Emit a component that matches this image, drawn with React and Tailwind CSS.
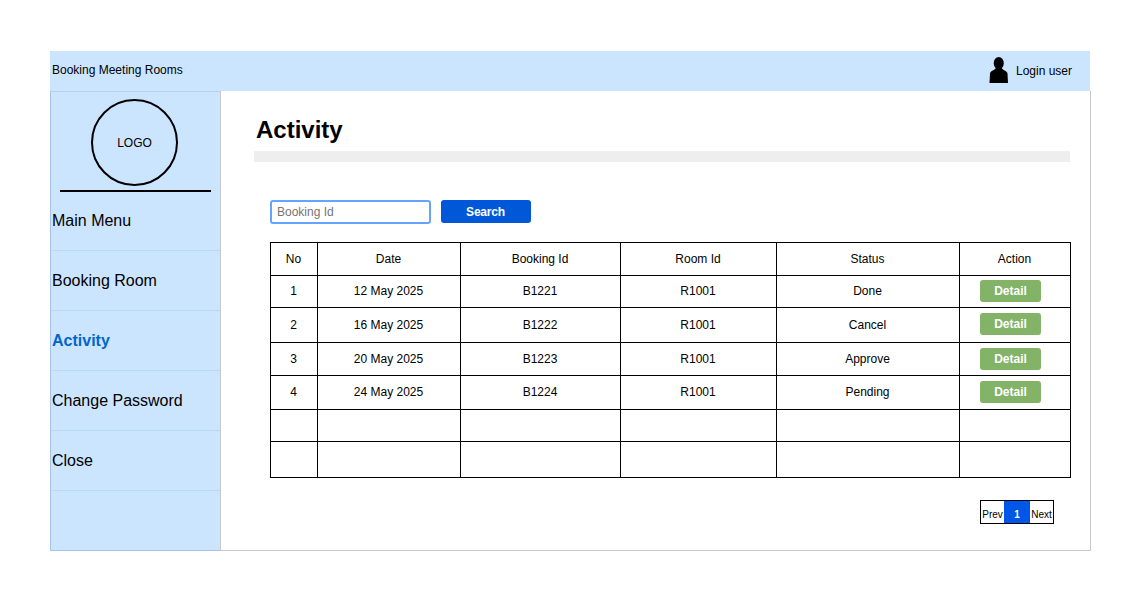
const rows = [
  ["1", "12 May 2025", "B1221", "R1001", "Done", 32, "pb-[2px]", "pb-[2px]"],
  ["2", "16 May 2025", "B1222", "R1001", "Cancel", 35, "", "pb-[2px]"],
  ["3", "20 May 2025", "B1223", "R1001", "Approve", 33, "", ""],
  ["4", "24 May 2025", "B1224", "R1001", "Pending", 34, "pb-[2px]", "pb-[2px]"],
];
const menu = ["Booking Room", "Activity", "Change Password", "Close"];
const td = "border border-black text-center p-0 pr-px font-normal";

export default function App() {
  return (
    <div className="w-[1141px] h-[601px] bg-white pt-[51px] pl-[50px] text-black text-[12px] font-['Liberation_Sans',Arial,sans-serif]">
      <div className="w-[1041px] h-[500px] flex flex-col">
        <header className="h-[40px] w-[1040px] shrink-0 bg-[#cce5ff] flex items-center justify-between pl-[2px] pr-[18px]">
          <span className="mt-[-2px]">Booking Meeting Rooms</span>
          <div className="flex items-center gap-[8px]">
            <svg width="19" height="26" viewBox="0 0 19 26" className="mt-[-2px]">
              <ellipse cx="9.75" cy="6.2" rx="5" ry="6.2" fill="#000" />
              <path d="M7 10.5 C6 13.5 1.5 13.5 1 16.5 L0.5 26 H19 L18.5 16.5 C18 13.5 13.5 13.5 12.5 10.5 Z" fill="#000" />
            </svg>
            <span>Login user</span>
          </div>
        </header>
        <div className="flex-1 flex min-h-0">
          <aside className="w-[170px] shrink-0 bg-[#cce5ff] border-l border-b border-t border-[#a9c4eb] border-t-[#b5d0ee] flex flex-col">
            <div className="h-[98px] shrink-0 pt-[7px] pl-[40px]">
              <div className="w-[87px] h-[87px] rounded-full border-2 border-black flex items-center justify-center">LOGO</div>
            </div>
            <div className="h-[2px] w-[151px] ml-[9px] bg-black shrink-0" />
            <div className="h-[59px] shrink-0 flex items-center pl-px text-[16px] border-b border-[#b9d8f7]">Main Menu</div>
            {menu.map((m) => (
              <div
                key={m}
                className={`h-[60px] shrink-0 flex items-center pl-px text-[16px] border-b border-[#b9d8f7] ${m === "Activity" ? "font-bold text-[#0066cc]" : ""}`}
              >
                {m}
              </div>
            ))}
          </aside>
          <main className="flex-1 border-l border-r border-b border-[#c8c8c8] pl-[33px] pr-[19px] min-w-0">
            <h1 className="text-[24px] leading-[28px] font-bold mt-[25px] ml-[2px]">Activity</h1>
            <div className="h-[11px] w-[816px] bg-[#eeeeee] mt-[7px]" />
            <div className="flex items-start gap-[10px] mt-[38px] ml-[16px]">
              <input
                placeholder="Booking Id"
                readOnly
                className="w-[161px] h-[24px] rounded-[3px] border-2 border-[#66a3ff] bg-white px-[5px] text-[12px] outline-none placeholder:text-[#757575]"
              />
              <button className="w-[90px] h-[23px] rounded-[3px] bg-[#0057d8] text-white font-bold tracking-[-0.2px] pr-px">Search</button>
            </div>
            <table className="mt-[18px] ml-[16px] w-[801px] border-collapse table-fixed">
              <colgroup>
                <col className="w-[47px]" />
                <col className="w-[143px]" />
                <col className="w-[160px]" />
                <col className="w-[156px]" />
                <col className="w-[183px]" />
                <col className="w-[111px]" />
              </colgroup>
              <thead>
                <tr className="h-[33px]">
                  {["No", "Date", "Booking Id", "Room Id", "Status", "Action"].map((h) => (
                    <th key={h} className={td}>{h}</th>
                  ))}
                </tr>
              </thead>
              <tbody>
                {rows.map(([no, date, id, room, status, h, textPad, btnPad]) => (
                  <tr key={no} style={{ height: h }}>
                    <td className={`${td} ${textPad}`}>{no}</td>
                    <td className={`${td} ${textPad}`}>{date}</td>
                    <td className={`${td} ${textPad}`}>{id}</td>
                    <td className={`${td} ${textPad}`}>{room}</td>
                    <td className={`${td} ${textPad}`}>{status}</td>
                    <td className={`${td} ${btnPad}`}>
                      <div className="flex pl-[20px]">
                        <button className="w-[61px] h-[22px] rounded-[3px] bg-[#82b366] text-white font-bold">Detail</button>
                      </div>
                    </td>
                  </tr>
                ))}
                {[32, 36].map((h) => (
                  <tr key={h} style={{ height: h }}>
                    {[0, 1, 2, 3, 4, 5].map((i) => (
                      <td key={i} className={td} />
                    ))}
                  </tr>
                ))}
              </tbody>
            </table>
            <div className="flex justify-end mt-[22px] mr-[17px]">
              <div className="flex h-[24px] w-[74px] border border-black text-[10px] leading-none">
                <span className="w-[23px] flex items-center justify-center pt-[5px]">Prev</span>
                <span className="w-[26px] bg-[#0057e7] text-white font-bold flex items-center justify-center pt-[5px]">1</span>
                <span className="flex-1 flex items-center justify-center pt-[5px]">Next</span>
              </div>
            </div>
          </main>
        </div>
      </div>
    </div>
  );
}
